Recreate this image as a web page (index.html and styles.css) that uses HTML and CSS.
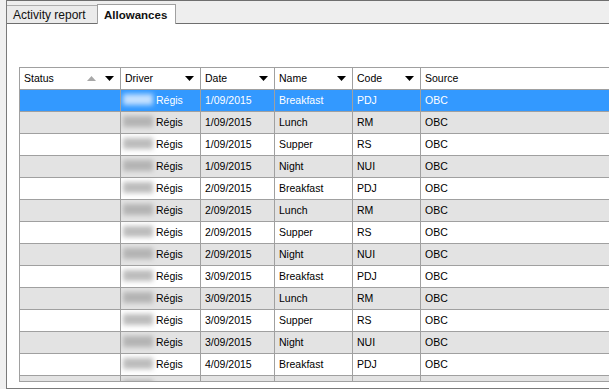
FILE: index.html
```html
<!DOCTYPE html>
<html lang="en">
<head>
    <meta charset="UTF-8">
    <meta name="viewport" content="width=device-width, initial-scale=1.0">
    <title>Allowances</title>
    <link rel="stylesheet" href="styles.css">
</head>
<body>
    <div class="frame">
        <div class="tabs">
            <div class="tab">Activity report</div>
            <div class="tab active">Allowances</div>
        </div>
        <div class="panel">
            <div class="grid">
                <div class="row head">
                    <div class="cell">
                        <span>Status</span>
                        <span class="arrows">
                            <svg class="sort" width="9" height="5" viewBox="0 0 9 5"><path d="M0 5h9L4.5 0z"/></svg>
                            <svg class="drop" width="9" height="5" viewBox="0 0 9 5"><path d="M0 0h9L4.5 5z"/></svg>
                        </span>
                    </div>
                    <div class="cell">
                        <span>Driver</span>
                        <svg class="drop" width="9" height="5" viewBox="0 0 9 5"><path d="M0 0h9L4.5 5z"/></svg>
                    </div>
                    <div class="cell">
                        <span>Date</span>
                        <svg class="drop" width="9" height="5" viewBox="0 0 9 5"><path d="M0 0h9L4.5 5z"/></svg>
                    </div>
                    <div class="cell">
                        <span>Name</span>
                        <svg class="drop" width="9" height="5" viewBox="0 0 9 5"><path d="M0 0h9L4.5 5z"/></svg>
                    </div>
                    <div class="cell">
                        <span>Code</span>
                        <svg class="drop" width="9" height="5" viewBox="0 0 9 5"><path d="M0 0h9L4.5 5z"/></svg>
                    </div>
                    <div class="cell"><span>Source</span></div>
                </div>
                <div class="row selected">
                    <div class="cell"></div>
                    <div class="cell driver"><span class="blur"></span>Régis</div>
                    <div class="cell">1/09/2015</div>
                    <div class="cell">Breakfast</div>
                    <div class="cell">PDJ</div>
                    <div class="cell">OBC</div>
                </div>
                <div class="row">
                    <div class="cell"></div>
                    <div class="cell driver"><span class="blur"></span>Régis</div>
                    <div class="cell">1/09/2015</div>
                    <div class="cell">Lunch</div>
                    <div class="cell">RM</div>
                    <div class="cell">OBC</div>
                </div>
                <div class="row">
                    <div class="cell"></div>
                    <div class="cell driver"><span class="blur"></span>Régis</div>
                    <div class="cell">1/09/2015</div>
                    <div class="cell">Supper</div>
                    <div class="cell">RS</div>
                    <div class="cell">OBC</div>
                </div>
                <div class="row">
                    <div class="cell"></div>
                    <div class="cell driver"><span class="blur"></span>Régis</div>
                    <div class="cell">1/09/2015</div>
                    <div class="cell">Night</div>
                    <div class="cell">NUI</div>
                    <div class="cell">OBC</div>
                </div>
                <div class="row">
                    <div class="cell"></div>
                    <div class="cell driver"><span class="blur"></span>Régis</div>
                    <div class="cell">2/09/2015</div>
                    <div class="cell">Breakfast</div>
                    <div class="cell">PDJ</div>
                    <div class="cell">OBC</div>
                </div>
                <div class="row">
                    <div class="cell"></div>
                    <div class="cell driver"><span class="blur"></span>Régis</div>
                    <div class="cell">2/09/2015</div>
                    <div class="cell">Lunch</div>
                    <div class="cell">RM</div>
                    <div class="cell">OBC</div>
                </div>
                <div class="row">
                    <div class="cell"></div>
                    <div class="cell driver"><span class="blur"></span>Régis</div>
                    <div class="cell">2/09/2015</div>
                    <div class="cell">Supper</div>
                    <div class="cell">RS</div>
                    <div class="cell">OBC</div>
                </div>
                <div class="row">
                    <div class="cell"></div>
                    <div class="cell driver"><span class="blur"></span>Régis</div>
                    <div class="cell">2/09/2015</div>
                    <div class="cell">Night</div>
                    <div class="cell">NUI</div>
                    <div class="cell">OBC</div>
                </div>
                <div class="row">
                    <div class="cell"></div>
                    <div class="cell driver"><span class="blur"></span>Régis</div>
                    <div class="cell">3/09/2015</div>
                    <div class="cell">Breakfast</div>
                    <div class="cell">PDJ</div>
                    <div class="cell">OBC</div>
                </div>
                <div class="row">
                    <div class="cell"></div>
                    <div class="cell driver"><span class="blur"></span>Régis</div>
                    <div class="cell">3/09/2015</div>
                    <div class="cell">Lunch</div>
                    <div class="cell">RM</div>
                    <div class="cell">OBC</div>
                </div>
                <div class="row">
                    <div class="cell"></div>
                    <div class="cell driver"><span class="blur"></span>Régis</div>
                    <div class="cell">3/09/2015</div>
                    <div class="cell">Supper</div>
                    <div class="cell">RS</div>
                    <div class="cell">OBC</div>
                </div>
                <div class="row">
                    <div class="cell"></div>
                    <div class="cell driver"><span class="blur"></span>Régis</div>
                    <div class="cell">3/09/2015</div>
                    <div class="cell">Night</div>
                    <div class="cell">NUI</div>
                    <div class="cell">OBC</div>
                </div>
                <div class="row">
                    <div class="cell"></div>
                    <div class="cell driver"><span class="blur"></span>Régis</div>
                    <div class="cell">4/09/2015</div>
                    <div class="cell">Breakfast</div>
                    <div class="cell">PDJ</div>
                    <div class="cell">OBC</div>
                </div>
                <div class="row">
                    <div class="cell"></div>
                    <div class="cell driver"><span class="blur"></span></div>
                    <div class="cell"></div>
                    <div class="cell"></div>
                    <div class="cell"></div>
                    <div class="cell"></div>
                </div>
            </div>
        </div>
    </div>
</body>
</html>
```

FILE: styles.css
```css
body {
    margin: 0;
    height: 389px;
    overflow: hidden;
    background-color: #f0f0f0;
    font-family: "Liberation Sans", Arial, sans-serif;
    font-size: 10.5px;
    color: #000;
}
.frame {
    margin-left: 6px;
    height: 389px;
    box-sizing: border-box;
    border-left: 1px solid #7a7a7a;
    display: flex;
    flex-direction: column;
}
.tabs {
    height: 23px;
    box-sizing: border-box;
    border-top: 1px solid #6e6e6e;
    background-color: #eeeeee;
    display: flex;
    align-items: flex-end;
}
.tab {
    height: 18px;
    width: 90px;
    box-sizing: border-box;
    padding-left: 6px;
    border-top: 1px solid #adadad;
    background-color: #ebebeb;
    font-size: 12px;
    line-height: 18px;
    color: #111;
}
.tab.active {
    width: 79px;
    height: 20px;
    margin-bottom: -1px;
    padding-top: 1px;
    border: 1px solid #a0a0a0;
    border-bottom: none;
    background-color: #fff;
    font-size: 11.5px;
    font-weight: bold;
    line-height: 18px;
    position: relative;
}
.panel {
    flex: 1;
    background-color: #fff;
    border-top: 1px solid #6e6e6e;
    border-bottom: 1px solid #7a7a7a;
    padding: 43px 0 0 12px;
}
.grid {
    height: 315px;
    box-sizing: border-box;
    overflow: hidden;
    border: 1px solid #a0a0a0;
    border-right: none;
}
.row {
    display: grid;
    grid-template-columns: 101px 80px 74px 78px 68px 1fr;
    height: 22px;
    box-sizing: border-box;
    border-bottom: 1px solid #a0a0a0;
    line-height: 21px;
}
.row:nth-child(odd) {
    background-color: #e3e3e3;
}
.row.head {
    background-color: #fff;
}
.row.selected {
    background-color: #3399ff;
    color: #fff;
}
.cell {
    border-right: 1px solid #a0a0a0;
    padding-left: 4px;
    white-space: nowrap;
    overflow: hidden;
}
.cell:last-child {
    border-right: none;
}
.head .cell {
    display: flex;
    align-items: center;
    justify-content: space-between;
    padding-right: 6px;
}
.arrows {
    display: flex;
    gap: 9px;
}
.drop {
    fill: #000;
}
.sort {
    fill: #a8a8a8;
}
.driver {
    padding-left: 2px;
}
.blur {
    display: inline-block;
    width: 30px;
    height: 11px;
    margin-right: 3px;
    vertical-align: -1px;
    background-color: #a0a0a0;
    opacity: 0.7;
    filter: blur(2.5px);
}
.selected .blur {
    background-color: #e8f2ff;
    opacity: 0.8;
}
```
